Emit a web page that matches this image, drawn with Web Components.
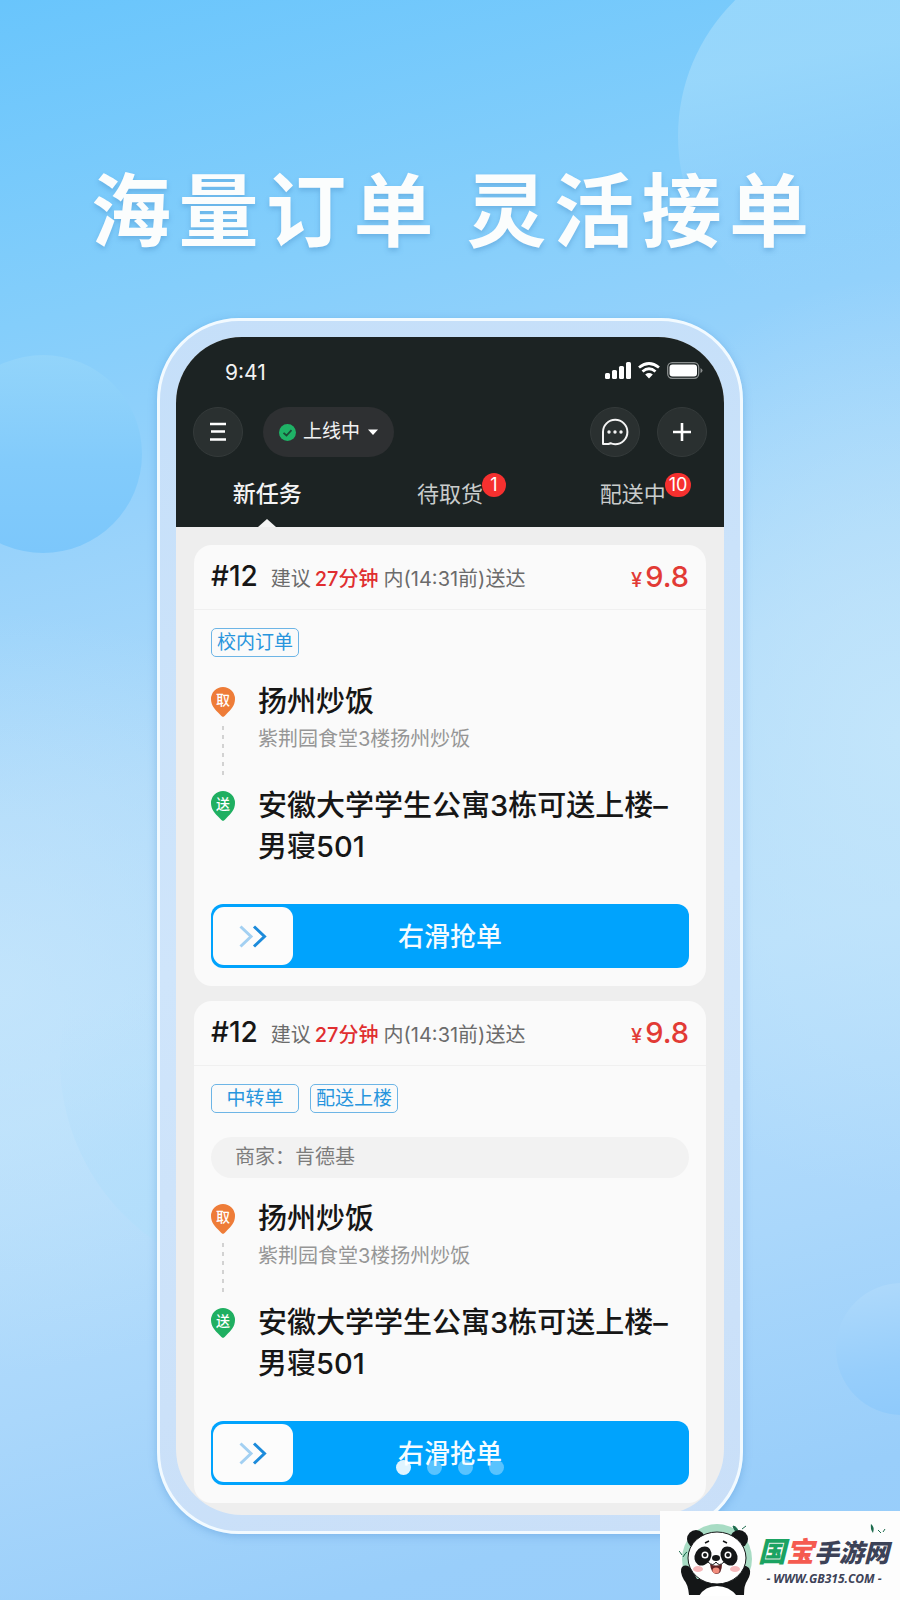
<!DOCTYPE html>
<html lang="zh-CN">
<head>
<meta charset="utf-8">
<meta name="viewport" content="width=device-width, initial-scale=1">
<title>海量订单 灵活接单</title>
<style>
  body {
    margin: 0;
    font-family: Inter, "Noto Sans CJK SC", sans-serif;
    color: #1a1a1a;
  }
</style>
</head>
<body>
<promo-stage>
  <promo-title slot="title">海量订单 灵活接单</promo-title>
  <phone-frame>
    <app-header slot="header"></app-header>
    <order-card number="#12" minutes="27分钟" deadline="内(14:31前)送达" price="9.8" tags="校内订单"
      shop="扬州炒饭" address="紫荆园食堂3楼扬州炒饭" target="安徽大学学生公寓3栋可送上楼–男寝501"></order-card>
    <order-card number="#12" minutes="27分钟" deadline="内(14:31前)送达" price="9.8" tags="中转单,配送上楼" merchant="肯德基"
      shop="扬州炒饭" address="紫荆园食堂3楼扬州炒饭" target="安徽大学学生公寓3栋可送上楼–男寝501"></order-card>
  </phone-frame>
  <carousel-dots slot="dots" count="4"></carousel-dots>
  <site-mark slot="mark"></site-mark>
</promo-stage>

<script>
class BaseElement extends HTMLElement {
  connectedCallback() {
    if (this.shadowRoot) return;
    this.attachShadow({ mode: 'open' }).innerHTML =
      `<style>:host,*{box-sizing:border-box}button,select,input{font:inherit;color:inherit;margin:0}${this.css()}</style>${this.html()}`;
  }
  attr(name) { return this.getAttribute(name) || ''; }
}

customElements.define('promo-stage', class extends BaseElement {
  css() { return `
    :host { display: block; position: relative; overflow: hidden;
      background:
        radial-gradient(ellipse 420px 380px at 0% 62%, rgba(200,231,252,.7), rgba(200,231,252,0)),
        radial-gradient(ellipse 360px 460px at 100% 46%, rgba(196,230,251,.9), rgba(196,230,251,0)),
        linear-gradient(166deg, #69c5fc 0%, #84cefb 18%, #97d2fb 30%, #aedafa 45%, #b8dffb 62%, #aad7fb 78%, #99cefa 92%, #97cdfa 100%); }
    .orb { position: absolute; border-radius: 50%; }
    .a { width: 380px; height: 380px; right: -158px; top: -54px;
      background: linear-gradient(168deg, rgba(160,218,251,.75) 30%, rgba(150,210,252,.5) 55%, rgba(150,208,251,0) 80%); }
    .b { width: 198px; height: 198px; left: -56px; top: 355px;
      background: linear-gradient(180deg, rgba(150,214,250,.75), #82cbfb 55%, #7cc7fb); }
    .c { width: 440px; height: 440px; left: 60px; top: 840px;
      background: linear-gradient(160deg, rgba(190,228,252,0) 30%, rgba(178,222,251,.9) 70%); }
    .d { width: 132px; height: 132px; right: -68px; top: 1283px;
      background: linear-gradient(170deg, #b0dafb, #97cefb 60%, #8dc9fb); }
    .body { position: relative; display: flex; flex-direction: column; align-items: center; padding: 157px 24px 66px; gap: 65px; }
    slot[name=dots]::slotted(*) { position: absolute; left: 0; right: 0; bottom: 125px; }
    slot[name=mark]::slotted(*) { position: absolute; right: 0; bottom: 0; }`; }
  html() { return `
    <div class="orb a"></div><div class="orb b"></div><div class="orb c"></div><div class="orb d"></div>
    <main class="body"><slot name="title"></slot><slot></slot></main>
    <slot name="dots"></slot><slot name="mark"></slot>`; }
});

customElements.define('promo-title', class extends BaseElement {
  css() { return `
    :host { display: block; width: 100%; max-width: 718px; }
    h1 { margin: 0; font: 700 80px/96px "Noto Sans CJK SC", sans-serif; color: #fbfdfd;
      text-align: justify; text-align-last: justify; text-shadow: 0 3px 5px rgba(60,130,190,.35); }`; }
  html() { return `<h1><slot></slot></h1>`; }
});

customElements.define('phone-frame', class extends BaseElement {
  css() { return `
    :host { display: block; width: 100%; max-width: 586px; padding: 16px; border: 3px solid #f2faff; border-radius: 82px;
      background: linear-gradient(170deg, #c5dff9, #cfe5fb 50%, #c9dff8); box-shadow: 0 2px 8px rgba(60,130,200,.35); }
    .screen { border-radius: 66px; overflow: hidden; background: #eeeeee; }
    .list { display: flex; flex-direction: column; gap: 15px; padding: 18px 18px 12px; }`; }
  html() { return `<div class="screen"><slot name="header"></slot><div class="list"><slot></slot></div></div>`; }
});

customElements.define('app-header', class extends BaseElement {
  css() { return `
    :host { display: block; background: #1c2323; color: #f2f2f2; }
    .status { display: flex; justify-content: space-between; align-items: center; height: 70px; padding: 0 21px 0 49px; font-size: 21px; }
    .icons { display: flex; align-items: center; gap: 7px; padding-bottom: 4px; }
    .actions { display: flex; align-items: center; gap: 17px; padding: 0 17px; }
    .round { display: grid; place-items: center; width: 50px; height: 50px; padding: 0; border: 1px solid #343a3a; border-radius: 50%; background: #2a3030; }
    .state { display: flex; align-items: center; gap: 7px; height: 50px; margin: 0 auto 0 3px; padding: 0 16px; border-radius: 25px; background: #2e3032; font-size: 19px; }
    select { appearance: none; border: 0; padding: 0; background: none; line-height: 28px; }
    nav { display: grid; grid-template-columns: repeat(3, 1fr); }
    nav button { position: relative; height: 70px; padding: 22px 0 18px; border: 0; background: none; font-size: 22px; line-height: 30px; color: #c9cccc; }
    nav .on { font-size: 23px; font-weight: 500; color: #f4f4f4; }
    .on::after { content: ""; position: absolute; left: 50%; bottom: 0; margin-left: -9px; border: 9px solid transparent; border-top: 0; border-bottom: 8px solid #f4f4f4; }
    .label { position: relative; }
    .badge { position: absolute; left: 100%; top: -8px; margin-left: -1px; min-width: 24px; height: 24px; padding: 0 4px; border-radius: 12px;
      background: #f6302f; color: #fff; font-size: 18px; line-height: 24px; text-align: center; }`; }
  html() { return `
    <div class="status"><span>9:41</span>
      <span class="icons">
        <svg width="26" height="17" viewBox="0 0 26 17" fill="#fff"><rect x="0" y="11" width="5" height="6" rx="1.5"/><rect x="7" y="8" width="5" height="9" rx="1.5"/><rect x="14" y="4" width="5" height="13" rx="1.5"/><rect x="21" y="0" width="5" height="17" rx="1.5"/></svg>
        <svg width="22" height="17" viewBox="0 0 22 17" fill="none" stroke="#fff" stroke-width="2.8"><path d="M1 5.5Q11-2.5 21 5.5M4.5 9.5Q11 4 17.5 9.5"/><path d="M11 16.5 7.2 12.5Q11 9.6 14.8 12.5Z" fill="#fff" stroke="none"/></svg>
        <svg width="36" height="17" viewBox="0 0 36 17"><rect x=".7" y=".7" width="31" height="15.6" rx="4.5" fill="none" stroke="#8b8f8f" stroke-width="1.3"/><rect x="2.500" y="2.500" width="27.500" height="12" rx="3" fill="#fff"/><path d="M33.500 6v5q2-1 2-2.500t-2-2.500z" fill="#8b8f8f"/></svg>
      </span>
    </div>
    <div class="actions">
      <button class="round" aria-label="菜单"><svg width="18" height="20" viewBox="0 0 18 20" stroke="#fff" stroke-width="2.400"><path d="M1 2H17M2 9.500H16M1 17.500H17"/></svg></button>
      <label class="state">
        <svg width="17" height="17" viewBox="0 0 17 17"><circle cx="8.500" cy="8.500" r="8.500" fill="#1fb266"/><path d="M4.500 8.800 7.500 11.500 12.500 6.200" fill="none" stroke="#1c4a35" stroke-width="1.800"/></svg>
        <select aria-label="接单状态"><option>上线中</option></select>
        <svg width="10" height="6" viewBox="0 0 10 6"><path d="M0 .5H10L5 6Z" fill="#fff"/></svg>
      </label>
      <button class="round" aria-label="消息"><svg width="28" height="28" viewBox="0 0 28 28" fill="none" stroke="#f4f4f4" stroke-width="2"><path d="M2 26V14A12.200 12.200 0 1 1 14.200 26.200Q11.500 26.200 9.500 25.200L7.500 26Z" stroke-linejoin="round"/><g fill="#f4f4f4" stroke="none"><circle cx="8" cy="14" r="1.700"/><circle cx="14" cy="14" r="1.700"/><circle cx="20" cy="14" r="1.700"/></g></svg></button>
      <button class="round" aria-label="添加"><svg width="18" height="18" viewBox="0 0 18 18" stroke="#fff" stroke-width="2.600"><path d="M0 9H18M9 0V18"/></svg></button>
    </div>
    <nav>
      <button class="on">新任务</button>
      <button><span class="label">待取货<span class="badge">1</span></span></button>
      <button><span class="label">配送中<span class="badge">10</span></span></button>
    </nav>`; }
});

customElements.define('order-card', class extends BaseElement {
  css() { return `
    :host { display: block; border-radius: 18px; background: #fafafa; }
    header { display: flex; align-items: center; height: 65px; padding: 0 17px 2px; border-bottom: 1px solid #f0f0f0; font-size: 20px; color: #6b6b6b; }
    .no { margin-right: 13px; font-size: 28px; font-weight: 500; color: #161616; }
    .eta { padding-top: 2px; white-space: nowrap; }
    .eta b { margin: 0 5px 0 4px; font-weight: 500; color: #e02e30; }
    .price { margin-left: auto; font-size: 29px; font-weight: 500; color: #e23a35; }
    .price small { margin-right: 3px; font-size: 20px; }
    .body { padding: 18px 17px; }
    .tags { display: flex; gap: 11px; margin-bottom: 24px; }
    .tag { min-width: 88px; height: 29px; padding: 0 4px; border: 1px solid #6db5e6; border-radius: 5px; font-size: 19px; line-height: 27px; text-align: center; color: #2795dd; }
    .merchant { height: 41px; margin-bottom: 20px; padding: 0 24px; border-radius: 21px; background: #f2f2f2; font-size: 20px; line-height: 41px; color: #7c7c7c; }
    .stop { display: grid; grid-template-columns: 24px 1fr; column-gap: 23px; }
    .rail { display: flex; flex-direction: column; align-items: center; gap: 9px; padding: 6px 0 5px; }
    .rail i { flex: 1; width: 2px; background: repeating-linear-gradient(#d2d2d2 0 4px, transparent 4px 9px); }
    h2 { margin: 0; font-size: 29px; line-height: 41px; font-weight: 500; color: #161616; }
    p { margin: 3px 0 32px; font-size: 20px; line-height: 28px; color: #969696; }
    grab-slider { margin-top: 37px; }`; }
  pin(color, text) {
    return `<svg width="24" height="30" viewBox="0 0 24 30"><path d="M12 30Q10.500 29.500 8.500 27C4 22.500 0 18.500 0 12a12 12 0 0 1 24 0C24 18.500 20 22.500 15.500 27Q13.500 29.500 12 30Z" fill="${color}"/><text x="12" y="18" font-size="14" font-weight="500" text-anchor="middle" fill="#fff">${text}</text></svg>`;
  }
  html() {
    const tags = this.attr('tags').split(',').map(t => `<span class="tag">${t}</span>`).join('');
    const merchant = this.attr('merchant') ? `<div class="merchant">商家：${this.attr('merchant')}</div>` : '';
    return `
    <header><span class="no">${this.attr('number')}</span><span class="eta">建议<b>${this.attr('minutes')}</b>${this.attr('deadline')}</span><span class="price"><small>¥</small>${this.attr('price')}</span></header>
    <div class="body">
      <div class="tags">${tags}</div>
      ${merchant}
      <div class="stop"><div class="rail">${this.pin('#ee7c38', '取')}<i></i></div><div><h2>${this.attr('shop')}</h2><p>${this.attr('address')}</p></div></div>
      <div class="stop"><div class="rail">${this.pin('#1faf61', '送')}</div><h2>${this.attr('target')}</h2></div>
      <grab-slider></grab-slider>
    </div>`;
  }
});

customElements.define('grab-slider', class extends BaseElement {
  css() {
    const arrows = encodeURIComponent('<svg xmlns="http://www.w3.org/2000/svg" width="28" height="23" viewBox="0 0 28 23" fill="none" stroke-width="3"><path d="M1.500 1.500 12 11.500 1.500 21.500" stroke="#a3d0f2"/><path d="M15 1.500 25.500 11.500 15 21.500" stroke="#1c8bdb"/></svg>');
    return `
    :host { display: block; }
    label { display: grid; height: 64px; border-radius: 12px; background: #00a3fd; }
    label > * { grid-area: 1 / 1; }
    span { align-self: center; justify-self: center; font-size: 26px; line-height: 36px; font-weight: 500; color: #f5fbff; padding-top: 2px; pointer-events: none; }
    input { appearance: none; width: 100%; height: 64px; padding: 0 2px; background: none; }
    input::-webkit-slider-thumb { appearance: none; width: 80px; height: 58px; border-radius: 11px; background: #fcfcfc url("data:image/svg+xml,${arrows}") center / 28px 23px no-repeat; }`;
  }
  html() { return `<label><input type="range" min="0" max="100" value="0"><span>右滑抢单</span></label>`; }
});

customElements.define('carousel-dots', class extends BaseElement {
  css() { return `
    :host { display: flex; justify-content: center; gap: 16px; }
    button { width: 15px; height: 15px; padding: 0; border: 0; border-radius: 50%; background: #fff; opacity: .35; }
    button:first-child { opacity: .88; }
    div { display: contents; }`; }
  html() { return `<div>${Array.from({ length: +this.attr('count') }, (_, i) => `<button aria-label="第${i + 1}张"></button>`).join('')}</div>`; }
});

customElements.define('site-mark', class extends BaseElement {
  css() { return `
    :host { display: block; background: #fdfdfd; }
    a { display: flex; align-items: center; gap: 3px; width: 240px; height: 89px; padding: 8px 10px 0 19px; color: #3c4257; text-decoration: none; }
    .text { position: relative; flex: 1; padding-bottom: 2px; }
    .name { display: flex; align-items: baseline; font: italic 900 25px/40px "Noto Sans CJK SC", sans-serif; white-space: nowrap; }
    .name span { font-size: 28px; }
    .g { color: #1ba362; }
    .r { color: #f55b50; }
    .url { font: italic 700 12px/16px "Open Sans", sans-serif; text-align: center; white-space: nowrap; }
    .leaf { position: absolute; right: 4px; top: -6px; }`; }
  html() { return `
    <a href="#">
      <svg width="76" height="72" viewBox="0 0 76 72">
        <circle cx="38" cy="35" r="35" fill="#a8dcc4"/>
        <path d="M54 2Q59 3 59 9Q55 7 54 2ZM3 31Q1 28 0 27M4 33Q6 29 8 28M63 5 67 2" fill="#1d6b4d" stroke="#1d6b4d"/>
        <path d="M10 71Q9 60 5 56 0 47 3 43 8 39 13 46L18 55H56L60 44Q65 39 70 44 73 49 68 57 65 61 65 71Z" fill="#141617"/>
        <circle cx="17" cy="15" r="9" fill="#141617"/><circle cx="60" cy="15" r="9" fill="#141617"/>
        <path d="M20 72Q26 62 38 62T58 72Z" fill="#fff"/>
        <ellipse cx="38" cy="34" rx="29" ry="26" fill="#fefefe" stroke="#17191a"/>
        <g fill="#141617"><ellipse cx="24" cy="32" rx="8" ry="10" transform="rotate(30 24 32)"/><ellipse cx="50" cy="32" rx="8" ry="10" transform="rotate(-30 50 32)"/><ellipse cx="37" cy="34" rx="4" ry="3"/></g>
        <circle cx="26" cy="31" r="3.500" fill="#fff"/><circle cx="49" cy="31" r="3.500" fill="#fff"/><circle cx="26" cy="31" r="2" fill="#141617"/><circle cx="49" cy="31" r="2" fill="#141617"/>
        <path d="M26 19 30 17M44 17 48 19" stroke="#141617" stroke-width="1.500"/>
        <path d="M31 40Q37 43 43 40 43 50 37 50 32 49 31 40Z" fill="#5f2223"/><ellipse cx="37" cy="46.500" rx="3.500" ry="3" fill="#f18c7c"/>
        <path d="M29 38Q34 43 37 38 40 43 45 38" fill="none" stroke="#141617"/>
        <ellipse cx="19" cy="45" rx="5" ry="3" fill="#f7b9bb"/><ellipse cx="56" cy="45" rx="5" ry="3" fill="#f7b9bb"/>
      </svg>
      <div class="text">
        <div class="name"><span class="g">国</span><span class="r">宝</span>手游网</div>
        <div class="url">- WWW.GB315.COM -</div>
        <svg class="leaf" width="16" height="12" viewBox="0 0 16 12"><path d="M1 0Q5 3 3 9Q0 5 1 0Z" fill="#1d6b4d"/><path d="M8 6 11 9M13 8 15 5" stroke="#1d6b4d"/></svg>
      </div>
    </a>`; }
});
</script>
</body>
</html>
